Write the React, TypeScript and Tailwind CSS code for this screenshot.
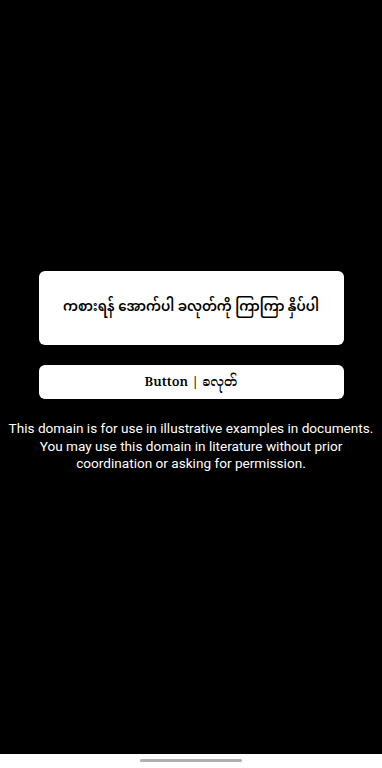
export default function App() {
  return (
    <div className="h-screen bg-black flex flex-col">
      <div className="flex-1 flex flex-col items-center pt-[271px]">
        <div
          className="w-[305px] h-[74px] bg-white rounded-md flex items-center justify-center text-black text-[13.4px] font-semibold whitespace-nowrap"
          style={{ fontFamily: '"Noto Sans Myanmar", "Padauk", "Myanmar Text", "Noto Sans", sans-serif' }}
        >
          ကစားရန် အောက်ပါ ခလုတ်ကို ကြာကြာ နှိပ်ပါ
        </div>
        <button
          className="mt-5 w-[305px] h-[34px] bg-white rounded-md flex items-center justify-center text-black text-[13px] font-semibold"
          style={{ fontFamily: '"Noto Serif", "Noto Serif Myanmar", "Liberation Serif", serif' }}
        >
          Button | ခလုတ်
        </button>
        <p
          className="mt-[21px] text-white text-[13.6px] leading-[17.5px] text-center"
          style={{ fontFamily: 'Roboto, "Liberation Sans", sans-serif' }}
        >
          This domain is for use in illustrative examples in documents.
          <br />
          You may use this domain in literature without prior
          <br />
          coordination or asking for permission.
        </p>
      </div>
      <div className="h-[14px] bg-white flex justify-center pt-[5px]">
        <div className="w-[102px] h-[3px] rounded-full bg-[#b0b0b0]" />
      </div>
    </div>
  )
}
